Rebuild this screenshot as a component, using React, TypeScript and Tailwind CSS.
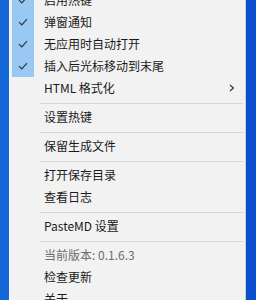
import React from "react";

const Check = () => (
  <svg width="10" height="8" viewBox="0 0 10 8" fill="none">
    <path d="M1 4.2 L3.8 7 L9 1.2" stroke="#333" strokeWidth="1.2" />
  </svg>
);

const Row = ({ label, checked = false, grey = false, arrow = false }: { label: string; checked?: boolean; grey?: boolean; arrow?: boolean }) => (
  <div className="flex h-[22px] items-center">
    <div className={`ml-[2px] flex h-[22px] w-[22px] items-center justify-center ${checked ? "bg-[#99c9f3]" : ""}`}>
      {checked ? <Check /> : null}
    </div>
    <div className={`ml-[10px] flex-1 whitespace-nowrap text-[12px] leading-[22px] ${grey ? "text-[#6d6d6d]" : "text-[#1a1a1a]"}`}>{label}</div>
    {arrow ? (
      <svg className="mr-[10px]" width="6" height="8" viewBox="0 0 6 8" fill="none">
        <path d="M1 1 L4.5 4 L1 7" stroke="#333" strokeWidth="1.1" />
      </svg>
    ) : null}
  </div>
);

const Sep = () => (
  <div className="h-[7px] pt-[4px] pl-[30px] pr-[2px]">
    <div className="h-px bg-[#d6d6d6]" />
  </div>
);

export default function App() {
  return (
    <div
      className="flex h-[300px] w-[256px] overflow-hidden bg-[#0a4fcf]"
      style={{ fontFamily: '"Segoe UI", "Noto Sans CJK SC", "Noto Sans", sans-serif' }}
    >
      <div className="h-full w-[9px] bg-[#1467d6]" />
      <div className="h-full w-[237px] border-l border-r border-l-[#f8f8f8] border-r-[#c9cdd6] bg-[#f2f2f2]">
        <div className="-mt-[11px]">
          <Row label="启用热键" checked />
          <Row label="弹窗通知" checked />
          <Row label="无应用时自动打开" checked />
          <Row label="插入后光标移动到末尾" checked />
          <Row label="HTML 格式化" arrow />
          <Sep />
          <Row label="设置热键" />
          <Sep />
          <Row label="保留生成文件" />
          <Sep />
          <Row label="打开保存目录" />
          <Row label="查看日志" />
          <Sep />
          <Row label="PasteMD 设置" />
          <Sep />
          <Row label="当前版本: 0.1.6.3" grey />
          <Row label="检查更新" />
          <Row label="关于" />
        </div>
      </div>
      <div className="h-full flex-1" />
    </div>
  );
}
